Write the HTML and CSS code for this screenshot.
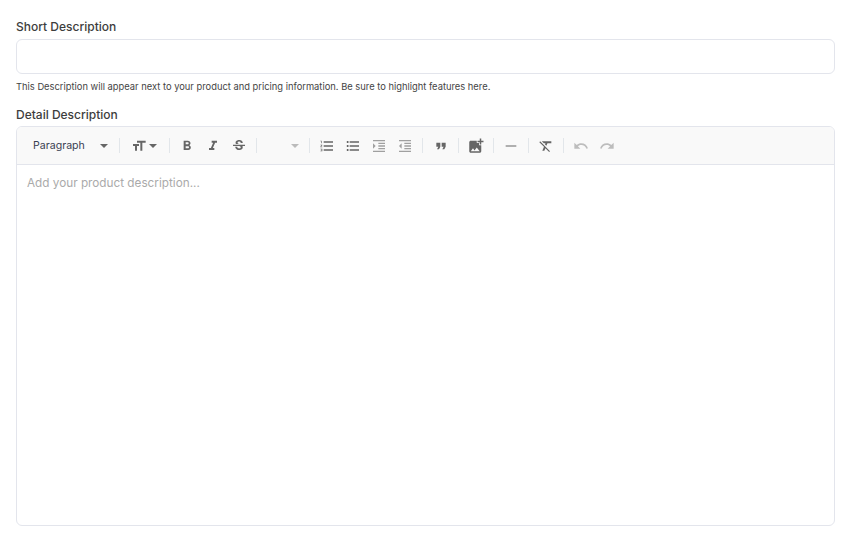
FILE: index.html
```html
<!DOCTYPE html>
<html lang="en">
<head>
    <meta charset="UTF-8">
    <title>Product description</title>
    <link rel="stylesheet" href="styles.css">
</head>
<body>
    <form class="product-form">
        <label class="field-label" for="short-desc">Short Description</label>
        <input class="text-input" id="short-desc" type="text">
        <p class="help-text">This Description will appear next to your product and pricing information. Be sure to highlight features here.</p>

        <label class="field-label detail-label">Detail Description</label>
        <div class="editor">
            <div class="toolbar">
                <div class="tool paragraph-tool"><span>Paragraph</span><i class="caret caret-dark"></i></div>
                <i class="sep"></i>
                <div class="tool size-tool">
                    <svg class="icon" viewBox="0 0 24 24"><path d="M9 4v3h5v12h3V7h5V4H9zm-6 8h3v7h3v-7h3V9H3v3z"/></svg>
                    <i class="caret caret-small"></i>
                </div>
                <i class="sep"></i>
                <div class="tool"><svg class="icon" viewBox="0 0 24 24"><path d="M15.6 10.79c.97-.67 1.65-1.77 1.65-2.79 0-2.26-1.75-4-4-4H7v14h7.04c2.09 0 3.71-1.7 3.71-3.79 0-1.52-.86-2.82-2.15-3.42zM10 6.5h3c.83 0 1.5.67 1.5 1.5s-.67 1.5-1.5 1.5h-3v-3zm3.5 9H10v-3h3.5c.83 0 1.5.67 1.5 1.5s-.67 1.5-1.5 1.5z"/></svg></div>
                <div class="tool"><svg class="icon" viewBox="0 0 24 24"><path d="M10 4v3h2.21l-3.42 8H6v3h8v-3h-2.21l3.42-8H18V4z"/></svg></div>
                <div class="tool"><svg class="icon" viewBox="0 0 24 24"><path d="M7.24 8.75c-.26-.48-.39-1.03-.39-1.67 0-.61.13-1.16.4-1.67.26-.5.63-.93 1.11-1.29.48-.35 1.05-.63 1.7-.83.66-.19 1.39-.29 2.18-.29.81 0 1.54.11 2.21.34.66.22 1.23.54 1.69.94.47.4.83.88 1.08 1.43.25.55.38 1.15.38 1.81h-3.01c0-.31-.05-.59-.15-.85-.09-.27-.24-.49-.44-.68-.2-.19-.45-.33-.75-.44-.3-.1-.66-.16-1.06-.16-.39 0-.74.04-1.03.13-.29.09-.53.21-.72.36-.19.16-.34.34-.44.55-.1.21-.15.43-.15.66 0 .48.25.88.74 1.21.38.25.77.48 1.41.7H7.39c-.05-.08-.11-.17-.15-.25zM21 12v-2H3v2h9.62c.18.07.4.14.55.2.37.17.66.34.87.51.21.17.35.36.43.57.07.2.11.43.11.69 0 .23-.05.45-.14.66-.09.2-.23.38-.42.53-.19.15-.42.26-.71.35-.29.08-.63.13-1.01.13-.43 0-.83-.04-1.18-.13s-.66-.23-.91-.42c-.25-.19-.45-.44-.59-.75-.14-.31-.25-.76-.25-1.21H6.4c0 .55.08 1.13.24 1.58.16.45.37.85.65 1.21.28.35.6.66.98.92.37.26.78.48 1.22.65.44.17.9.3 1.38.39.48.08.96.13 1.44.13.8 0 1.53-.09 2.18-.28s1.21-.45 1.67-.79c.46-.34.82-.77 1.07-1.27s.38-1.07.38-1.71c0-.6-.1-1.14-.31-1.61-.05-.11-.11-.23-.17-.33H21z"/></svg></div>
                <i class="sep"></i>
                <div class="tool color-tool"><i class="caret caret-light"></i></div>
                <i class="sep"></i>
                <div class="tool"><svg class="icon" viewBox="0 0 24 24"><path d="M2 17h2v.5H3v1h1v.5H2v1h3v-4H2v1zm1-9h1V4H2v1h1v3zm-1 3h1.8L2 13.1v.9h3v-1H3.2L5 10.9V10H2v1zm5-6v2h14V5H7zm0 14h14v-2H7v2zm0-6h14v-2H7v2z"/></svg></div>
                <div class="tool"><svg class="icon" viewBox="0 0 24 24"><path d="M4 10.5c-.83 0-1.5.67-1.5 1.5s.67 1.5 1.5 1.5 1.5-.67 1.5-1.5-.67-1.5-1.5-1.5zm0-6c-.83 0-1.5.67-1.5 1.5S3.17 7.5 4 7.5 5.5 6.83 5.5 6 4.83 4.5 4 4.5zm0 12c-.83 0-1.5.68-1.5 1.5s.68 1.5 1.5 1.5 1.5-.68 1.5-1.5-.67-1.5-1.5-1.5zM7 19h14v-2H7v2zm0-6h14v-2H7v2zm0-8v2h14V5H7z"/></svg></div>
                <div class="tool muted"><svg class="icon" viewBox="0 0 24 24"><path d="M3 21h18v-2H3v2zM3 8v8l4-4-4-4zm8 9h10v-2H11v2zM3 3v2h18V3H3zm8 6h10V7H11v2zm0 4h10v-2H11v2z"/></svg></div>
                <div class="tool muted"><svg class="icon" viewBox="0 0 24 24"><path d="M11 17h10v-2H11v2zm-8-5l4 4V8l-4 4zm0 9h18v-2H3v2zM3 3v2h18V3H3zm8 6h10V7H11v2zm0 4h10v-2H11v2z"/></svg></div>
                <i class="sep"></i>
                <div class="tool quote-tool"><svg class="icon" viewBox="0 0 24 24"><path d="M6 17h3l2-4V7H5v6h3zm8 0h3l2-4V7h-6v6h3z"/></svg></div>
                <i class="sep"></i>
                <div class="tool"><svg class="icon icon-large" viewBox="0 0 24 24"><path d="M19 7v2.99s-1.99.01-2 0V7h-3s.01-1.99 0-2h3V2h2v3h3v2h-3zm-3 4V8h-3V5H5c-1.1 0-2 .9-2 2v12c0 1.1.9 2 2 2h12c1.1 0 2-.9 2-2v-8h-3zM5 19l3-4 2 3 3-4 4 5H5z"/></svg></div>
                <i class="sep"></i>
                <div class="tool"><svg class="icon" viewBox="0 0 24 24"><path d="M4 11.3h16v1.4H4z"/></svg></div>
                <i class="sep"></i>
                <div class="tool"><svg class="icon" viewBox="0 0 24 24"><path d="M3.27 5L2 6.27l6.97 6.97L6.5 19h3l1.57-3.66L16.73 21 18 19.73 3.55 5.27 3.27 5zM6 5v.18L8.82 8h2.4l-.72 1.68 2.1 2.1L14.21 8H20V5H6z"/></svg></div>
                <i class="sep"></i>
                <div class="tool faint"><svg class="icon" viewBox="0 0 24 24"><path d="M12.5 8c-2.65 0-5.05.99-6.9 2.6L2 7v9h9l-3.62-3.62c1.39-1.16 3.16-1.88 5.12-1.88 3.54 0 6.55 2.31 7.6 5.5l2.37-.78C21.08 11.03 17.15 8 12.5 8z"/></svg></div>
                <div class="tool faint"><svg class="icon" viewBox="0 0 24 24"><path d="M18.4 10.6C16.55 8.99 14.15 8 11.5 8c-4.65 0-8.58 3.03-9.96 7.22L3.9 16c1.05-3.19 4.05-5.5 7.6-5.5 1.95 0 3.73.72 5.12 1.88L13 16h9V7l-3.6 3.6z"/></svg></div>
            </div>
            <div class="editor-body">Add your product description...</div>
        </div>
    </form>
</body>
</html>
```

FILE: styles.css
```css
body {
    margin: 0;
    font-family: 'Inter', 'Open Sans', sans-serif;
    color: #333;
    background-color: #fff;
}
.product-form {
    padding: 19px 19px 18px 16px;
}
.field-label {
    display: block;
    font-size: 12px;
    line-height: 16px;
    font-weight: 500;
    color: #3d3d3d;
}
.text-input {
    display: block;
    box-sizing: border-box;
    width: 100%;
    height: 35px;
    margin-top: 4px;
    background-color: #fff;
    border: 1px solid #e3e5ec;
    border-radius: 6px;
}
.help-text {
    margin: 6px 0 0;
    font-size: 9.36px;
    line-height: 13px;
    color: #444;
}
.detail-label {
    margin-top: 14px;
}
.editor {
    box-sizing: border-box;
    height: 400px;
    margin-top: 3px;
    border: 1px solid #e3e5ec;
    border-radius: 6px;
    overflow: hidden;
}
.toolbar {
    display: flex;
    align-items: center;
    height: 37px;
    padding: 0 8px;
    background-color: #f9f9f9;
    border-bottom: 1px solid #e3e5ec;
}
.tool {
    display: flex;
    align-items: center;
    justify-content: center;
    width: 26px;
    height: 26px;
    flex: none;
    color: #666;
}
.muted {
    color: #a0a0a0;
}
.faint {
    color: #bdbdbd;
}
.paragraph-tool {
    justify-content: space-between;
    box-sizing: border-box;
    width: 90px;
    padding: 0 7px 0 8px;
    font-size: 10.6px;
    color: #3a3f52;
}
.size-tool {
    box-sizing: border-box;
    width: 41px;
    padding-right: 2px;
    gap: 2px;
}
.quote-tool {
    width: 27px;
}
.color-tool {
    justify-content: flex-end;
    box-sizing: border-box;
    width: 44px;
    padding-right: 6px;
}
.sep {
    flex: none;
    width: 1px;
    height: 15px;
    margin: 0 4px;
    background-color: #e2e6ea;
}
.icon {
    display: block;
    width: 16px;
    height: 16px;
    fill: currentColor;
}
.icon-large {
    width: 18px;
    height: 18px;
}
.caret {
    flex: none;
    width: 0;
    height: 0;
    border-left: 4.5px solid transparent;
    border-right: 4.5px solid transparent;
    border-top: 4.5px solid #666;
}
.caret-small {
    border-left-width: 4px;
    border-right-width: 4px;
    border-top-width: 4px;
}
.caret-light {
    border-top-color: #bbb;
}
.editor-body {
    padding: 11px 10px;
    font-size: 11.75px;
    line-height: 15px;
    color: #aaa;
}
```
